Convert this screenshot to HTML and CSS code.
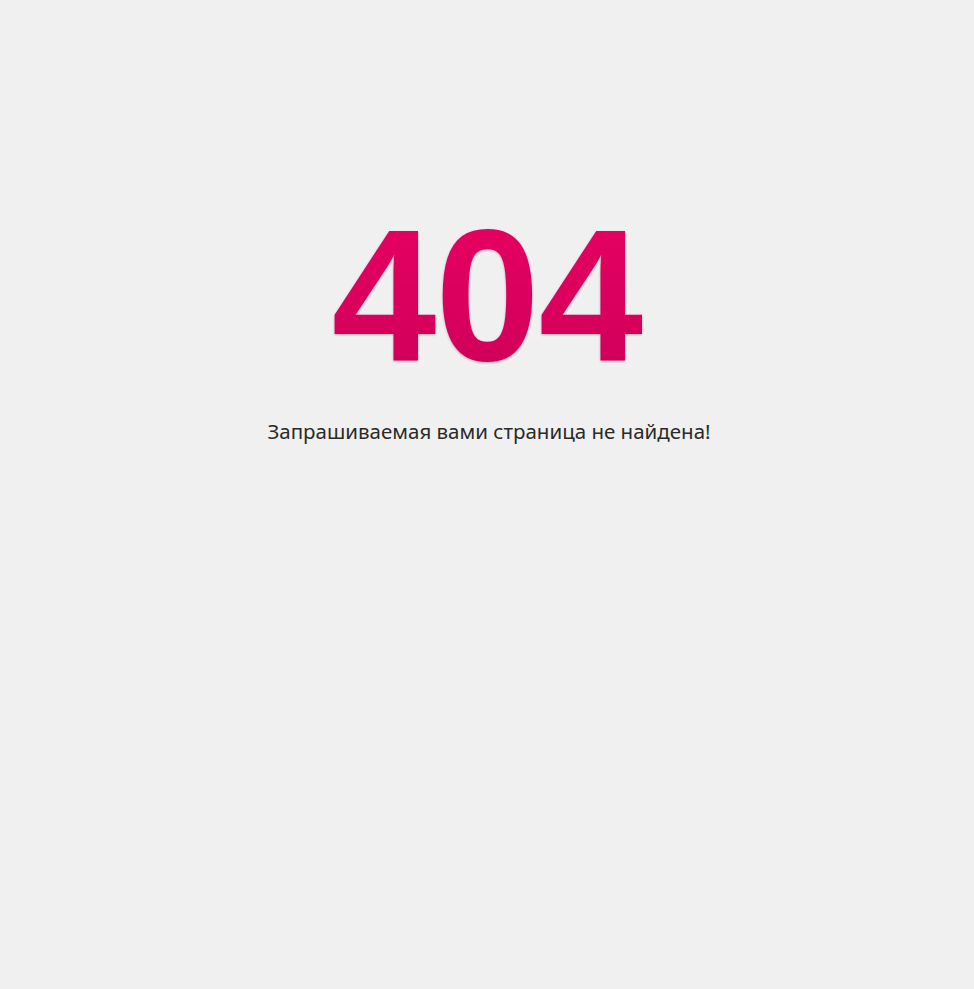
FILE: index.html
```html
<!DOCTYPE html>
<html lang="ru">
<head>
<meta charset="utf-8">
<title>404</title>
<link rel="stylesheet" href="styles.css">
</head>
<body>
<main class="page">
  <h1 class="code">404</h1>
  <p class="message">Запрашиваемая вами страница не найдена!</p>
</main>
</body>
</html>
```
FILE: styles.css
```css
html, body {
  margin: 0;
  padding: 0;
  background: #f0f0f0;
}
.page {
  display: flex;
  flex-direction: column;
  align-items: center;
  padding-top: 190px;
  padding-left: 4px;
}
.code {
  margin: 0 4px 0 0;
  font-family: "Liberation Sans", Arial, sans-serif;
  font-weight: bold;
  font-size: 188px;
  line-height: 210px;
  letter-spacing: -1px;
  background: linear-gradient(to bottom, #ea0062 0%, #cc0058 100%);
  -webkit-background-clip: text;
  background-clip: text;
  color: transparent;
  filter: drop-shadow(0 1px 1px rgba(80, 0, 30, 0.3));
}
.message {
  margin: 17px 0 0;
  font-family: "Noto Sans", "Open Sans", sans-serif;
  font-size: 20.5px;
  color: #2a2a2a;
}
```
